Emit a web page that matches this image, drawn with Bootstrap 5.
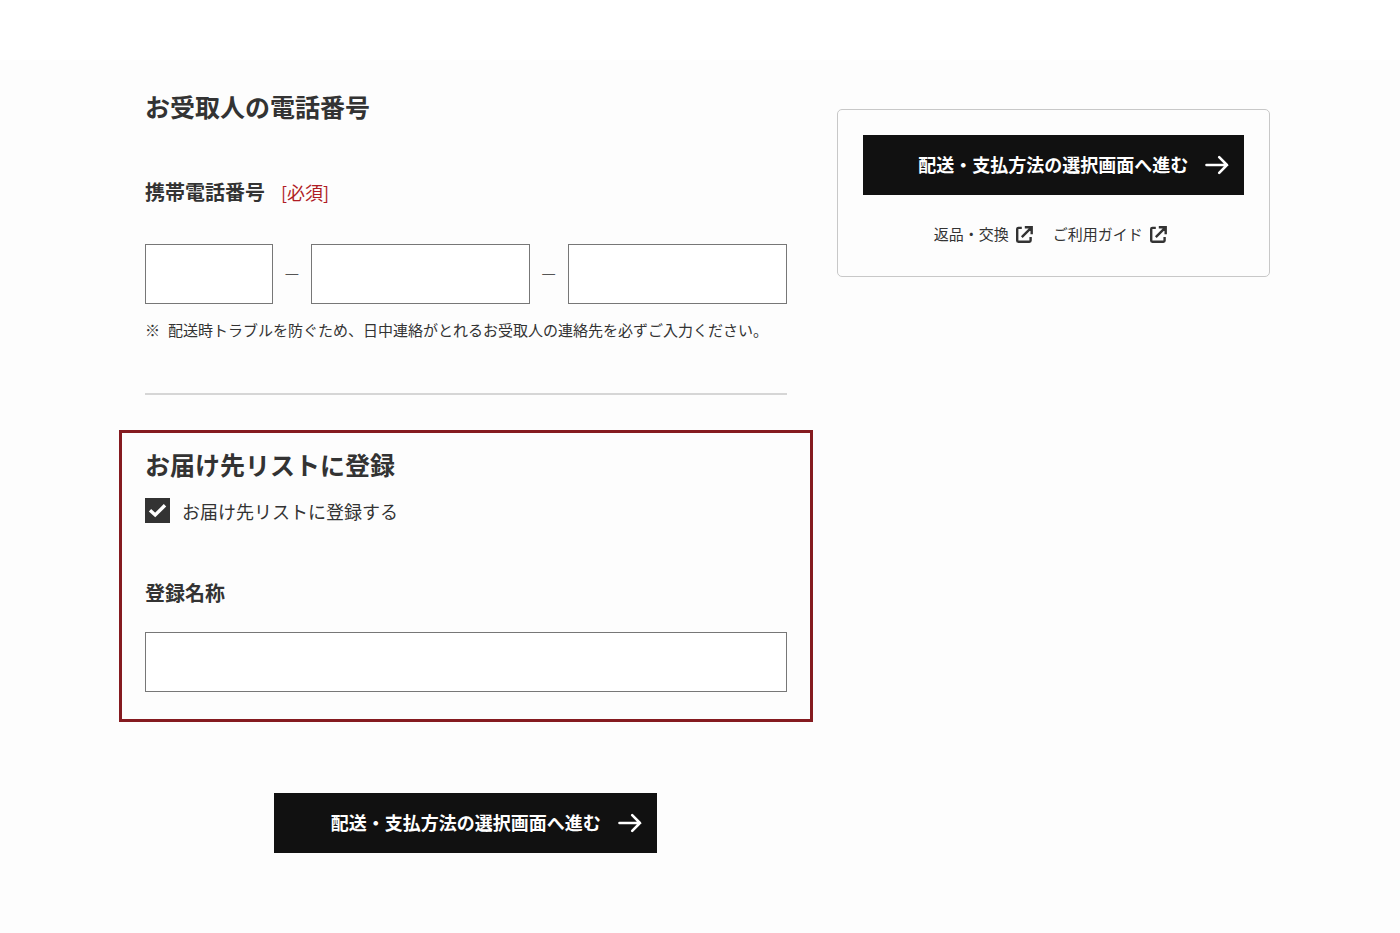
<!DOCTYPE html>
<html lang="ja">
<head>
<meta charset="utf-8">
<meta name="viewport" content="width=device-width, initial-scale=1">
<title>お受取人の電話番号</title>
<link href="https://cdn.jsdelivr.net/npm/bootstrap@5.3.0/dist/css/bootstrap.min.css" rel="stylesheet">
<style>
  body { font-family: "Noto Sans CJK JP", sans-serif; font-size: 15px; line-height: 24px; color: #333; background: #fdfdfd; }
  .top-strip { height: 60px; background: #fff; }
  .page { padding: 30px 130px 80px 145px; display: grid; grid-template-columns: 641fr 433fr; column-gap: 50px; align-items: start; }
  .section-title { font-size: 25px; line-height: 32px; font-weight: 700; margin: 0; }
  .field-label { font-size: 20px; line-height: 28px; font-weight: 700; }
  .phone-label { margin: 56px 0 38px; }
  .required { font-size: 18px; color: #b01c24; }
  .phone-grid { display: grid; grid-template-columns: 128fr 38px 219fr 38px 219fr; }
  .dash { font-size: 16px; color: #555; text-align: center; padding-bottom: 4px; }
  .form-control { height: 60px; border: 1px solid #777; border-radius: 0; background: #fff; min-width: 0; }
  .note { margin-top: 14px; }
  .divider { border: 0; height: 2px; background: #d6d6d6; opacity: 1; margin: 51px 0 35px; }
  .register { border: 3px solid #851b20; margin: 0 -26px; padding: 15px 23px 27px; }
  .check-row { margin: 18px 0 56px; }
  .register .form-check-input { width: 25px; height: 25px; margin: 0; border: 0; border-radius: 0; flex: none; }
  .register .form-check-input:checked { background-color: #333; background-size: 25px; background-image: url("data:image/svg+xml,%3Csvg xmlns='http://www.w3.org/2000/svg' viewBox='0 0 25 25'%3E%3Cpath d='M5 12.2L10.2 17L20 7.3' fill='none' stroke='white' stroke-width='3.4'/%3E%3C/svg%3E"); }
  .check-text { font-size: 18px; }
  .name-label { margin-bottom: 25px; }
  .btn-next { height: 60px; border: 0; border-radius: 0; padding: 0 0 2px; background: #111; color: #fff; font-size: 18px; line-height: 28px; font-weight: 700; }
  .btn-next:hover { background: #333; color: #fff; }
  .btn-next svg { right: 15px; }
  .submit { width: 383px; max-width: 100%; margin-top: 71px; }
  .side { border: 1px solid #c8c8c8; border-radius: 5px; padding: 25px 25px 30px; margin-top: 19px; }
  .side-links { column-gap: 20px; margin-top: 27px; padding-right: 6px; }
  .side a { color: #333; text-decoration: none; gap: 7px; }
  @media (max-width: 1199px) {
    .page { grid-template-columns: 1fr; padding: 30px 40px; }
  }
</style>
</head>
<body>
<svg class="d-none" aria-hidden="true">
  <symbol id="arrow" viewBox="0 0 24 20"><path d="M1.5 10H22M14.2 2.2L22 10L14.2 17.8" fill="none" stroke="currentColor" stroke-width="2.6" stroke-linecap="round"/></symbol>
  <symbol id="external" viewBox="0 0 17 17"><path d="M5.8 1.9H2.4Q1.2 1.9 1.2 3.1V14.6Q1.2 15.8 2.4 15.8H13.4Q14.6 15.8 14.6 14.6V11M8.8 1.3H15.7V8.2M15.3 1.7L5.8 11.2" fill="none" stroke="currentColor" stroke-width="2.4"/></symbol>
</svg>
<header class="top-strip"></header>
<main class="page">
  <form>
    <h2 class="section-title">お受取人の電話番号</h2>
    <div class="phone-label d-flex align-items-center">
      <label class="field-label" for="tel1">携帯電話番号</label>
      <span class="required ms-3">[必須]</span>
    </div>
    <div class="phone-grid align-items-center">
      <input class="form-control" id="tel1" type="tel" aria-label="携帯電話番号 1">
      <span class="dash">—</span>
      <input class="form-control" type="tel" aria-label="携帯電話番号 2">
      <span class="dash">—</span>
      <input class="form-control" type="tel" aria-label="携帯電話番号 3">
    </div>
    <div class="note d-flex gap-2"><span>※</span><span>配送時トラブルを防ぐため、日中連絡がとれるお受取人の連絡先を必ずご入力ください。</span></div>
    <hr class="divider">
    <section class="register">
      <h2 class="section-title">お届け先リストに登録</h2>
      <div class="check-row d-flex align-items-center">
        <input class="form-check-input" type="checkbox" id="register" checked>
        <label class="check-text ps-2 ms-1" for="register">お届け先リストに登録する</label>
      </div>
      <label class="field-label name-label d-block" for="list-name">登録名称</label>
      <input class="form-control" type="text" id="list-name">
    </section>
    <button class="btn btn-next submit d-block mx-auto position-relative" type="submit">配送・支払方法の選択画面へ進む
      <svg class="position-absolute top-50 translate-middle-y" width="24" height="20"><use href="#arrow"/></svg>
    </button>
  </form>
  <aside class="side">
    <button class="btn btn-next d-block w-100 position-relative" type="button">配送・支払方法の選択画面へ進む
      <svg class="position-absolute top-50 translate-middle-y" width="24" height="20"><use href="#arrow"/></svg>
    </button>
    <div class="side-links d-flex flex-wrap justify-content-center">
      <a class="d-flex align-items-center" href="#">返品・交換<svg width="17" height="17"><use href="#external"/></svg></a>
      <a class="d-flex align-items-center" href="#">ご利用ガイド<svg width="17" height="17"><use href="#external"/></svg></a>
    </div>
  </aside>
</main>
<script src="https://cdn.jsdelivr.net/npm/bootstrap@5.3.0/dist/js/bootstrap.bundle.min.js"></script>
</body>
</html>
